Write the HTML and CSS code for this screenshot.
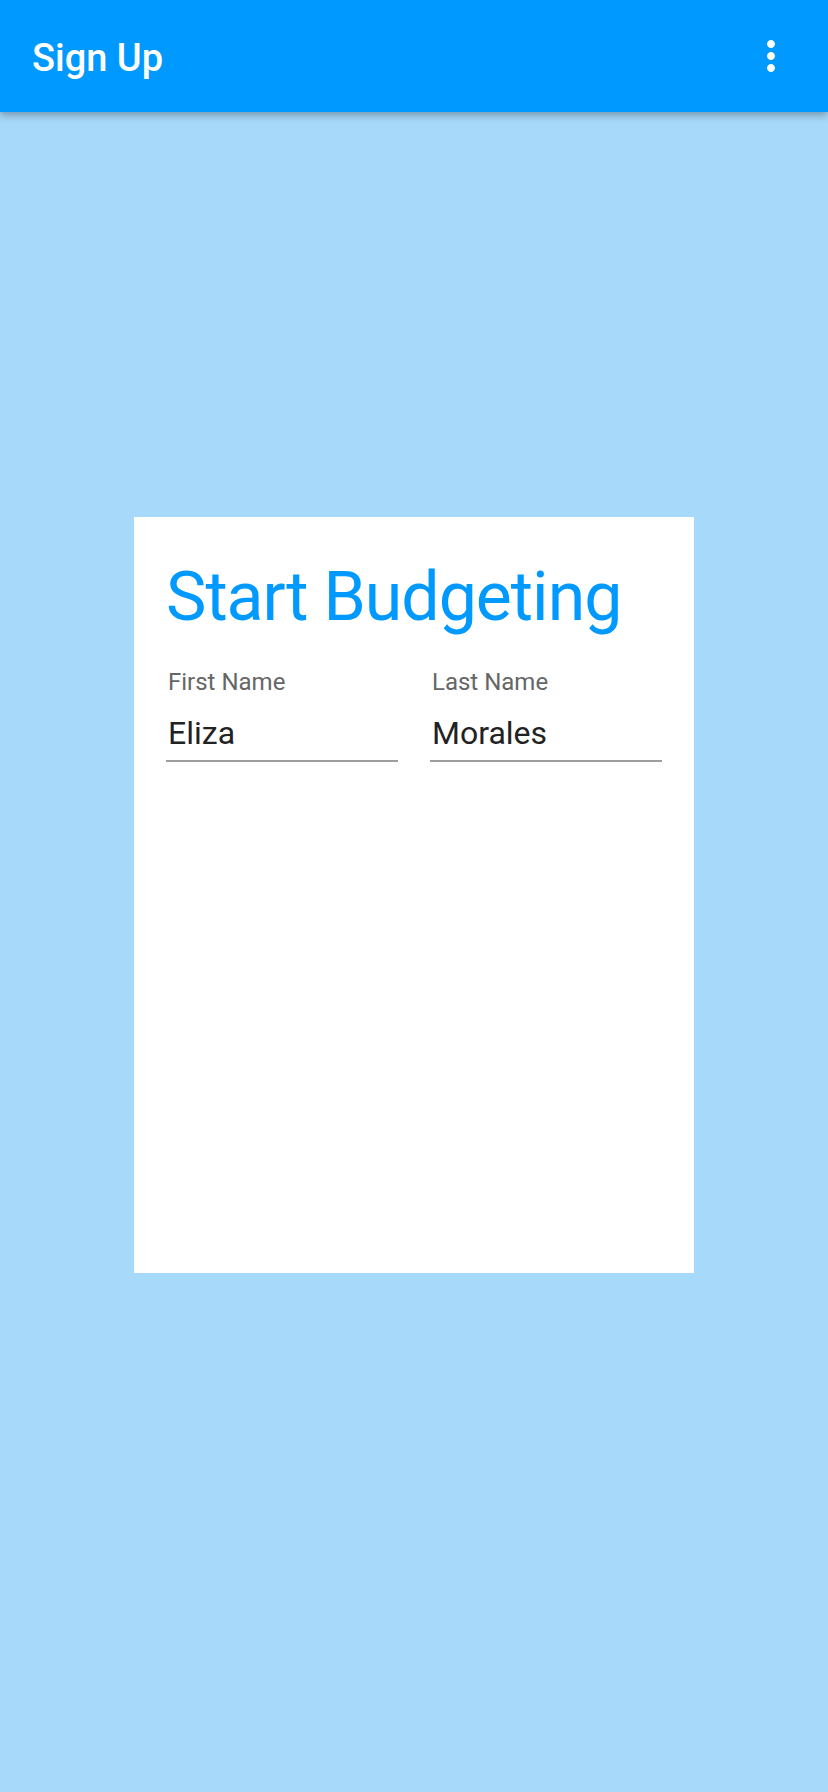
FILE: index.html
```html
<!DOCTYPE html>
<html lang="en">
<head>
<meta charset="utf-8">
<title>Sign Up</title>
<link rel="stylesheet" href="styles.css">
</head>
<body>
<header class="appbar">
  <h1 class="appbar-title">Sign Up</h1>
  <button class="menu-btn" aria-label="More options">
    <svg width="48" height="48" viewBox="0 0 24 24"><path fill="#fff" d="M12 8c1.1 0 2-.9 2-2s-.9-2-2-2-2 .9-2 2 .9 2 2 2zm0 2c-1.1 0-2 .9-2 2s.9 2 2 2 2-.9 2-2-.9-2-2-2zm0 6c-1.1 0-2 .9-2 2s.9 2 2 2 2-.9 2-2-.9-2-2-2z"/></svg>
  </button>
</header>
<main class="content">
  <section class="card">
    <h2 class="card-title">Start Budgeting</h2>
    <div class="fields">
      <div class="field">
        <div class="field-label">First Name</div>
        <div class="field-value">Eliza</div>
      </div>
      <div class="field">
        <div class="field-label">Last Name</div>
        <div class="field-value">Morales</div>
      </div>
    </div>
  </section>
</main>
</body>
</html>
```
FILE: styles.css
```css
* { box-sizing: border-box; }
html, body {
  margin: 0;
  padding: 0;
}
body {
  width: 828px;
  height: 1792px;
  overflow: hidden;
  background: #a7d9fa;
  font-family: Roboto, "Noto Sans", sans-serif;
}
.appbar {
  position: relative;
  z-index: 2;
  height: 112px;
  background: #0099ff;
  display: flex;
  align-items: center;
  justify-content: space-between;
  padding: 0 33px 0 32px;
  box-shadow: 0 3px 8px rgba(0, 0, 0, 0.32);
}
.appbar-title {
  margin: 4px 0 0 0;
  font-size: 38px;
  line-height: 44px;
  font-weight: 500;
  color: #fff;
}
.menu-btn {
  width: 48px;
  height: 48px;
  padding: 0;
  border: 0;
  background: transparent;
  display: flex;
}
.content {
  padding-top: 405px;
  display: flex;
  justify-content: center;
}
.card {
  width: 560px;
  height: 756px;
  background: #fff;
  padding: 40px 32px 0 32px;
}
.card-title {
  margin: 0;
  font-size: 68px;
  line-height: 80px;
  font-weight: 400;
  color: #0099ff;
  letter-spacing: -1px;
}
.fields {
  margin-top: 29px;
  display: grid;
  grid-template-columns: 232px 232px;
  column-gap: 32px;
}
.field-label {
  font-size: 24px;
  line-height: 32px;
  color: #666;
  padding-left: 2px;
}
.field-value {
  margin-top: 15px;
  font-size: 32px;
  line-height: 40px;
  color: #222;
  padding: 0 0 7px 2px;
  border-bottom: 2px solid #9e9e9e;
}
```
